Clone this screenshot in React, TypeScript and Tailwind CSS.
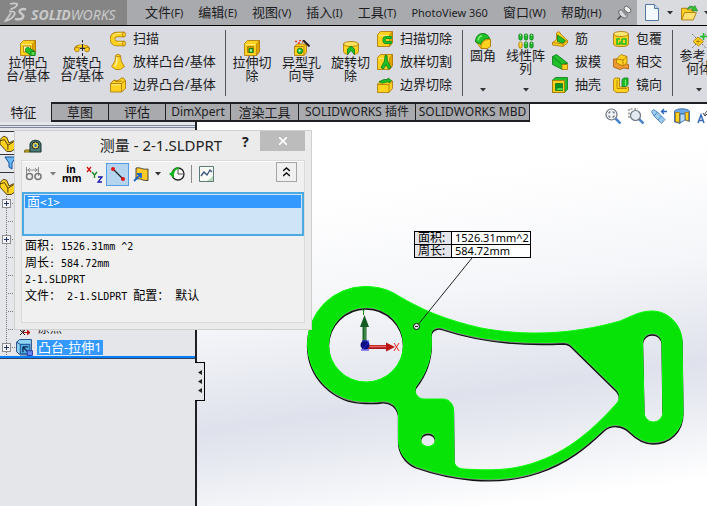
import React from "react";

const GOLD = "#ffd21f";
const EDGE = "#a87406";
const DARK = "#e0a400";
const GREEN = "#1fc02a";
const GEDGE = "#0b7a18";

type IconProps = { children: React.ReactNode; size?: number; box?: string };

function Icon({ children, size = 16, box = "0 0 16 16" }: IconProps) {
  return (
    <svg width={size} height={size} viewBox={box} fill="none" strokeWidth=".8" className="shrink-0" aria-hidden="true">
      {children}
    </svg>
  );
}

function Cube() {
  return (
    <>
      <path d="M.5 3.500 3.500.500h12v11l-3 4H.5Z" fill={GOLD} stroke={EDGE} />
      <path d="M12.500 4 15.500.500v11l-3 4Z" fill={DARK} stroke={EDGE} strokeWidth=".6" />
      <path d="M1.500 4.500h10" stroke="#fff09a" />
    </>
  );
}

const ExtrudeBoss = () => (
  <Icon>
    <Cube />
    <path d="M3.500 6h7v6h-7Z" fill="#fff3ae" stroke={EDGE} />
    <path d="M5.500 9 7.500 7l7.500 4.500v4h-4l-5.500-4Z" fill={GREEN} stroke={GEDGE} />
    <path d="M11 11.500h4v4h-4Z" fill="#55e04b" stroke={GEDGE} />
  </Icon>
);
const RevolveBoss = () => (
  <Icon>
    <path d="M1.500 10C1.500 6.500 5 6 8 6s6.500.5 6.500 4" stroke={EDGE} strokeWidth="3.200" />
    <path d="M2 9.500C2.500 6.500 5 6 8 6s5.500.5 6 3.500" stroke={GOLD} strokeWidth="1.800" />
    <circle cx="3" cy="9.500" r="2.300" fill={GOLD} stroke={EDGE} />
    <circle cx="13" cy="9.500" r="2.300" fill={GOLD} stroke={EDGE} />
    <path d="M8.500 0v2.500m0 1.500v7m0 2v3M6 8.500h5" stroke="#222" strokeWidth="1" />
  </Icon>
);
const Sweep = () => (
  <Icon>
    <path d="M14 3.500H7a4.500 4.500 0 0 0 0 9h7" stroke={EDGE} strokeWidth="5.500" />
    <path d="M14 3.500H7a4.500 4.500 0 0 0 0 9h7" stroke={GOLD} strokeWidth="4.200" />
    <path d="M13 2.500H7a5 5 0 0 0-4 3M13 11.500H8" stroke="#fff2a0" />
    <ellipse cx="14" cy="3.500" rx="1.500" ry="2.500" fill={GOLD} stroke={EDGE} />
    <ellipse cx="14" cy="12.500" rx="1.500" ry="2.500" fill={GOLD} stroke={EDGE} />
  </Icon>
);
const Loft = () => (
  <Icon>
    <path d="M5.500 1.500c1-1.300 4-1.300 5 0l.7 5.500 3.300 5.500-4 3h-5l-4-3L5 7Z" fill={GOLD} stroke={EDGE} />
    <path d="M6.800 3v5L5 12.500" stroke="#fff2a0" strokeWidth="1.500" />
    <path d="M5.500 2c1.500 1 3.500 1 5 0" stroke={EDGE} />
  </Icon>
);
const Boundary = () => (
  <Icon>
    <path d="M.5 6.500 4 3c3 1.500 6 0 7-2h2.500l2 3v7.500l-4 3.500H.5Z" fill={GOLD} stroke={EDGE} />
    <path d="M.5 6.500h11v8.500M11.500 6.500l4-3M4 3l2 1.500 6-.5" stroke={EDGE} />
    <path d="M1.500 7.800h9" stroke="#fff2a0" />
  </Icon>
);
const ExtrudeCut = () => (
  <Icon>
    <Cube />
    <path d="M3.500 6.500h6v6h-6Z" fill="#c99700" stroke={EDGE} />
    <path d="M5 8.500h4v4H5Z" fill={GREEN} stroke={GEDGE} />
    <path d="M6 9.500h2v2H6Z" fill="#c4efb4" />
  </Icon>
);
const HoleWizard = () => (
  <Icon>
    <path d="M.5 6.500 3 4h9.500v8.500L10 15.500H.5Z" fill={GOLD} stroke={EDGE} />
    <path d="M.5 6.500H10v9m0-9L12.500 4" stroke={EDGE} />
    <circle cx="6" cy="11" r="2.800" fill={GREEN} stroke={GEDGE} />
    <circle cx="5.500" cy="10.500" r="1" fill="#dff" />
    <path d="m9 0 6.500 6.500" stroke="#222" strokeWidth="2" />
    <path d="M1 1.500h2M5 .500h2M4 3h2M8 2h1" stroke="#e83a1a" strokeWidth="1.500" />
  </Icon>
);
const RevolveCut = () => (
  <Icon>
    <path d="M.5 4v7.500c0 1.500 2 2.500 4.500 3V9h6v5.500c2.500-.5 4.500-1.500 4.500-3V4Z" fill={GOLD} stroke={EDGE} />
    <ellipse cx="8" cy="4" rx="7.500" ry="2.500" fill="#ffe35a" stroke={EDGE} />
    <path d="M4.500 14.500V9L8 6l3.500 3v5.500L8 10.500Z" fill={GREEN} stroke={GEDGE} />
  </Icon>
);
const SweepCut = () => (
  <Icon>
    <Cube />
    <path d="M15 6.500H9.500a2.500 2.500 0 0 0 0 5H15" stroke={GEDGE} strokeWidth="3" />
    <path d="M15 6.500H9.500a2.500 2.500 0 0 0 0 5H15" stroke={GREEN} strokeWidth="1.900" />
  </Icon>
);
const LoftCut = () => (
  <Icon>
    <Cube />
    <path d="M8 1.500h2l.5 5.500 3.500 6.500-2.500 1.500L9 10.500 6.500 15 4 13.500 7.500 7Z" fill={GREEN} stroke={GEDGE} />
  </Icon>
);
const BoundaryCut = () => (
  <Icon>
    <path d="m.5 7 3-3h12v7.500l-3.500 4H.5Z" fill={GOLD} stroke={EDGE} />
    <path d="M.5 7.500H12v8M12 7.500 15.500 4" stroke={EDGE} />
    <path d="M2 4.500C4 4.500 5 2.500 8 2.500h3V1l3.500 2.500L12 6V4.800C9 4.500 8 6.500 4 6Z" fill={GREEN} stroke={GEDGE} />
  </Icon>
);
const Fillet = () => (
  <Icon>
    <path d="M.5 8 6 1h4l5.500 5.500v6L12 15.500H6Z" fill={GOLD} stroke={EDGE} />
    <path d="M.5 9C.5 3.500 3.500.500 8 .500c3.500 0 6 2.500 6.500 5C10 5 6.500 8 6 11.500Z" fill={GREEN} stroke={GEDGE} />
    <path d="M6 15.500C5.500 9 9.500 6 15.500 6.500v7l-3 2Z" fill={GOLD} stroke={EDGE} />
    <path d="M3 7.500C3.500 5 5 3.300 7 2.800" stroke="#8af07c" strokeWidth="1.500" />
  </Icon>
);
const Pattern = () => (
  <Icon>
    {[2.5, 8, 13.5].map((x) =>
      [4, 12].map((y) => {
        const seed = x === 2.5 && y > 10;
        return (
          <g key={`${x}-${y}`}>
            <rect x={x - 1.6} y={y - 3} width="3.200" height="6" rx="1.300" fill={seed ? GOLD : GREEN} stroke={seed ? EDGE : GEDGE} />
            <circle cx={x} cy={y - 1.7} r=".7" fill="#c6f5b8" />
          </g>
        );
      })
    )}
  </Icon>
);
const Rib = () => (
  <Icon>
    <path d="M.5 11.500 4.500 8.500V2L7 .500 9.500 4 13.500 7.500l2 2V12L11 15.500.5 14Z" fill={GOLD} stroke={EDGE} />
    <path d="M5.500 10.500V4l8 5.500L11 12Z" fill={GREEN} stroke={GEDGE} />
    <path d="m.5 11.500 10.500 1.500v2.500M11 13l4.500-3.500" stroke={EDGE} />
  </Icon>
);
const Draft = () => (
  <Icon>
    <path d="m.5 2.500 4-2 11 8.500-5 6.500-10-5Z" fill={GREEN} stroke={GEDGE} />
    <path d="m.5 2.500 9.500 8L15.500 9" stroke={GEDGE} />
    <path d="M10 10.500h5.500v5H10Z" fill={GOLD} stroke={EDGE} />
  </Icon>
);
const Shell = () => (
  <Icon>
    <path d="m.5 3 3-2.500h12v12l-3 3H.5Z" fill={GREEN} stroke={GEDGE} />
    <path d="M.5 3.500h12v12H.5Z" fill={GOLD} stroke={EDGE} />
    <path d="M3.500 6.500h7v7h-7Z" fill="#0d9220" stroke={GEDGE} />
    <path d="M4 13 6 11h4.500v2Z" fill="#4cda4a" />
  </Icon>
);
const Wrap = () => (
  <Icon>
    <path d="M.5 3v10c0 3.500 15 3.500 15 0V3Z" fill={GOLD} stroke={EDGE} />
    <ellipse cx="8" cy="3" rx="7.500" ry="2.500" fill="#ffe870" stroke={EDGE} />
    <path d="M7 8H4v5h3v-2.500M9 8h4v5H9V8" stroke={GREEN} strokeWidth="1.600" />
  </Icon>
);
const Intersect = () => (
  <Icon>
    <path d="M.5 5H7l4 4 4.500 1.500v4.500L11 14l-4 1.500L.5 13Z" fill="#ee9a32" stroke="#a85b0a" />
    <path d="M3.500 5 8 .500l6 2V9l-4 3-6.500-3Z" fill={GOLD} stroke={EDGE} />
    <path d="m3.500 5 6.500 1v6m0-6 4-3.500" stroke={EDGE} />
  </Icon>
);
const Mirror = () => (
  <Icon>
    <path d="M.5 2.500 2 1h4.500v9h9v4L14 15.500H3L.5 13Z" fill={GOLD} stroke={EDGE} />
    <path d="M9 2.500 11 1h4v6.500l-2 2H9Z" fill={GREEN} stroke={GEDGE} />
    <path d="M4 3v8.500h10" stroke={EDGE} />
    <path d="M12.500 3v6" stroke="#8af07c" />
  </Icon>
);
const RefGeometry = () => (
  <Icon>
    <path d="m1 1 14 14M15 1 1 15" stroke="#555" strokeDasharray="2 1.500" />
    <path d="m7 4 5.500 4.500L7.500 13 2 8.500Z" fill={GOLD} stroke={EDGE} />
    <path d="M7 6.500v4M5 8.500h4.500" stroke={EDGE} />
    <path d="M12.500 0v7M9 3.500h7" stroke={GREEN} strokeWidth="1.500" />
  </Icon>
);

function Caret({ className = "" }: { className?: string }) {
  return (
    <svg width="6" height="4" viewBox="0 0 6 4" className={`shrink-0 ${className}`} aria-hidden="true">
      <path d="M0 0h6L3 3.500Z" fill="#333" />
    </svg>
  );
}

type BigProps = { icon: React.ReactNode; lines: string[]; width: string; top?: boolean; menu?: boolean };

function BigCommand({ icon, lines, width, top, menu }: BigProps) {
  return (
    <button className={`flex h-full shrink-0 flex-col items-center ${top ? "pt-[7px]" : "pt-[14px]"} ${width}`}>
      {icon}
      {lines.map((l) => (
        <span key={l} className="whitespace-nowrap text-[13px] leading-[13px]">{l}</span>
      ))}
      {menu && <Caret className="mb-[10px] mt-auto" />}
    </button>
  );
}

function Stack({ items, className }: { items: [React.ReactNode, string][]; className: string }) {
  return (
    <div className={`flex shrink-0 flex-col pt-px ${className}`}>
      {items.map(([icon, label]) => (
        <button key={label} className="flex h-[23px] items-center gap-[7px] whitespace-nowrap text-[13px]">
          {icon}
          {label}
        </button>
      ))}
    </div>
  );
}

const Divider = () => <div className="mt-1 h-[66px] w-px shrink-0 bg-[#55565a]" />;

const menus: [string, string][] = [
  ["文件", "(F)"], ["编辑", "(E)"], ["视图", "(V)"], ["插入", "(I)"], ["工具", "(T)"],
  ["", "PhotoView 360"], ["窗口", "(W)"], ["帮助", "(H)"],
];

function TitleBar() {
  return (
    <header className="flex h-[26px] shrink-0 border-b border-black bg-[#a9aaae]">
      <div className="flex w-[127px] shrink-0 items-center bg-[#858585] pl-1 text-[#c9c9c9]">
        <svg width="23" height="22" viewBox="0 0 23 22" fill="none" stroke="currentColor" strokeWidth="1.800" aria-hidden="true">
          <path d="M6 2c4-1.200 8-.8 7 1.200C12.200 4.800 9 6.500 6.500 7.500M5 9.500c5-.5 6.500 1 5.500 3-1.300 2.700-5 5.500-9 6.500l5.500-8" />
          <path d="M22 7.500c-3-1-6.500-.2-6.500 2 0 1.800 4.300 2.300 3.800 5-.3 2.600-4.800 3.400-8.300 2.300" strokeWidth="2.400" />
        </svg>
        <span className="whitespace-nowrap pl-1 pt-1 text-[14px] leading-5 italic"><b>SOLID</b>WORKS</span>
      </div>
      <nav className="flex shrink-0 items-center gap-[15px] whitespace-nowrap pl-[18px]">
        {menus.map(([cn, key]) => (
          <button key={key} className="text-[13px] leading-5">
            {cn}
            <span className="text-[11px]">{key}</span>
          </button>
        ))}
      </nav>
      <button aria-label="固定菜单" className="ml-[14px] shrink-0">
        <Icon>
          <path d="m1.500 14.500 4-4" stroke="#444" strokeWidth="1.500" />
          <ellipse cx="7" cy="9" rx="5" ry="3" transform="rotate(42 7 9)" fill="#d9dadd" stroke="#555" />
          <path d="m6 6.500 3.500-4.500 5 4-5 5Z" fill="#8f9197" />
          <ellipse cx="11.500" cy="4.500" rx="4" ry="2.500" transform="rotate(42 11.500 4.500)" fill="#eee" stroke="#555" />
        </Icon>
      </button>
      <div className="ml-auto flex w-[70px] shrink-0 items-center overflow-hidden bg-[#dadbdf] pl-2">
        <button aria-label="新建" className="shrink-0">
          <svg width="14" height="17" viewBox="0 0 14 17" aria-hidden="true">
            <path d="M.5.500h9l4 4v12H.5Z" fill="#f4f9fe" stroke="#5379a3" />
            <path d="M9.500.500v4h4" fill="#c7dcf2" stroke="#5379a3" />
          </svg>
        </button>
        <Caret className="ml-2" />
        <button aria-label="打开" className="ml-2 shrink-0">
          <Icon size={17}>
            <path d="M.5 14V4h5l1 1.500h5V14Z" fill={GOLD} stroke={EDGE} />
            <path d="m.5 15 3-7h11l-3 7Z" fill="#ffe372" stroke={EDGE} />
            <path d="M6 5c1-3.500 4-3.500 6-2l1-1.500 2.500 5-5.500-.5 1-1.500C9.500 3.500 8 3.500 6 5Z" fill="#36c436" stroke={GEDGE} strokeWidth=".6" />
          </Icon>
        </button>
        <Caret className="ml-[6px]" />
      </div>
    </header>
  );
}

function Ribbon() {
  return (
    <section className="flex h-[76px] shrink-0 overflow-hidden bg-[#d9dbe0]">
      <BigCommand icon={<ExtrudeBoss />} lines={["拉伸凸", "台/基体"]} width="w-[56px]" />
      <BigCommand icon={<RevolveBoss />} lines={["旋转凸", "台/基体"]} width="w-[52px]" />
      <Stack className="w-[117px] pl-[2px]" items={[[<Sweep />, "扫描"], [<Loft />, "放样凸台/基体"], [<Boundary />, "边界凸台/基体"]]} />
      <Divider />
      <BigCommand icon={<ExtrudeCut />} lines={["拉伸切", "除"]} width="w-[52px]" />
      <BigCommand icon={<HoleWizard />} lines={["异型孔", "向导"]} width="w-[47px]" />
      <BigCommand icon={<RevolveCut />} lines={["旋转切", "除"]} width="w-[51px]" />
      <Stack className="w-[86px] pl-px" items={[[<SweepCut />, "扫描切除"], [<LoftCut />, "放样切割"], [<BoundaryCut />, "边界切除"]]} />
      <Divider />
      <BigCommand top menu icon={<Fillet />} lines={["圆角"]} width="w-[40px]" />
      <BigCommand top menu icon={<Pattern />} lines={["线性阵", "列"]} width="w-[45px]" />
      <Stack className="w-[61px] pl-1" items={[[<Rib />, "筋"], [<Draft />, "拔模"], [<Shell />, "抽壳"]]} />
      <Stack className="w-[63px] pl-1" items={[[<Wrap />, "包覆"], [<Intersect />, "相交"], [<Mirror />, "镜向"]]} />
      <Divider />
      <BigCommand top menu icon={<RefGeometry />} lines={["参考几", "何体"]} width="w-[52px]" />
    </section>
  );
}

const tabs: [string, string][] = [
  ["草图", "w-[57px]"], ["评估", "w-[57px]"], ["DimXpert", "w-[65px]"],
  ["渲染工具", "w-[68px]"], ["SOLIDWORKS 插件", "w-[117px]"], ["SOLIDWORKS MBD", "w-[115px]"],
];

function ViewTools() {
  return (
    <div className="z-10 flex h-[28px] min-w-0 flex-1 items-center gap-[7px] overflow-hidden border-t-2 border-[#202024] bg-white pb-[2px] pl-[75px]">
      <button aria-label="整屏显示全图" className="shrink-0">
        <Icon>
          <path d="m10.500 10.500 5 5" stroke="#4a84cc" strokeWidth="2.500" />
          <circle cx="6.500" cy="6.500" r="5.500" fill="#eef4fa" stroke="#70777f" strokeWidth="1.200" />
          <path d="M4 5.500V4h1.500M7.500 4H9v1.500M9 7.500V9H7.500M5.500 9H4V7.500" stroke="#333" />
        </Icon>
      </button>
      <button aria-label="局部放大" className="shrink-0">
        <Icon>
          <path d="m11 11 4.500 4.500" stroke="#4a84cc" strokeWidth="2.500" />
          <circle cx="7.500" cy="7.500" r="5" fill="#e3eaf2" stroke="#70777f" strokeWidth="1.200" />
          <path d="M1 10V1h9" stroke="#333" strokeDasharray="2 1.500" />
        </Icon>
      </button>
      <button aria-label="上一视图" className="shrink-0">
        <Icon>
          <path d="m.5 3.500 2-2 4 2.500 7.500 7.500-3.500 4L3 8Z" fill="#9ccbf0" stroke="#3b76b8" />
          <path d="m3 8 3.500-4M7 12l3.500-4" stroke="#3b76b8" />
          <path d="M16 3.500h-5.500M13 1l-2.500 2.500L13 6" stroke="#2862b8" strokeWidth="1.300" />
        </Icon>
      </button>
      <button aria-label="剖面视图" className="shrink-0">
        <Icon>
          <path d="M.5 3c3-3 12-3 15 0v10.500L11 12V6H6v9.500L.5 14Z" fill="#6aa9e6" stroke="#2b5f9e" />
          <path d="M1.500 4.500h4v10l-4-1ZM11 4.500h3.500v8.500L11 11.500Z" fill={GOLD} stroke={EDGE} />
          <path d="M6 6h5v6l-5 3Z" fill="#b9d8f5" stroke="#2b5f9e" />
        </Icon>
      </button>
      <button aria-label="视图定向" className="shrink-0">
        <Icon>
          <path d="m1 15 3-8 3 8M2 12.500h4" stroke="#3b6bb5" strokeWidth="1.500" />
          <path d="M15 2C9 2 8 5 8 7M6 5l2 3 3-3M10 14c4 1 5-1 6-3" stroke="#444" strokeWidth="1" />
        </Icon>
      </button>
    </div>
  );
}

function TabRow() {
  return (
    <div className="flex h-[20px] shrink-0 bg-[#d9dbe0]" role="tablist">
      <button role="tab" aria-selected="true" className="w-[51px] shrink-0 pl-1 pr-2 text-[13px] leading-4">特征</button>
      {tabs.map(([label, w]) => (
        <button
          key={label}
          role="tab"
          aria-selected="false"
          className={`shrink-0 whitespace-nowrap border-y-2 border-l border-[#202024] bg-[#a9aaae] leading-4 last-of-type:border-r ${w} ${/[A-Z]/.test(label) ? "text-[12px]" : "text-[13px]"}`}
        >
          {label}
        </button>
      ))}
      <ViewTools />
    </div>
  );
}

const YellowPart = () => (
  <Icon size={18}>
    <path d="m0 5 3-3 3 1 2 5 4-2 3 3v3l-5 3.500H6L0 9Z" fill={GOLD} stroke="#3a2c05" />
    <path d="m0 6 4-1 3 5 5-3M7 10v4" stroke="#3a2c05" />
  </Icon>
);

function Branch({ plus }: { plus?: boolean }) {
  return (
    <svg width="16" height="18" viewBox="0 0 16 18" className="shrink-0" shapeRendering="crispEdges" aria-hidden="true">
      <path d="M6.500 0v18M8 9.500h7" stroke="#777" strokeDasharray="1 1" />
      {plus && (
        <>
          <path d="M2.500 5.500h8v8h-8Z" fill="#f5f5f7" stroke="#8b8b90" />
          <path d="M4 9.500h5M6.500 7v5" stroke="#22356b" />
        </>
      )}
    </svg>
  );
}

function FeatureTree() {
  return (
    <aside className="relative w-[197px] shrink-0 border-r-2 border-[#202024] bg-[#e4e6ea]">
      <div className="mb-[3px] mt-[3px] h-[3px] border-y border-[#7c8599]" />
      <div className="h-6 w-[14px] overflow-hidden border-y border-[#333] bg-[#eceef2] pt-[2px]"><YellowPart /></div>
      <div className="h-[18px] border-b border-[#333] pl-1 pt-px">
        <svg width="14" height="14" viewBox="0 0 14 14" aria-hidden="true">
          <path d="M1 1h11L8 7v6l-3-2V7Z" fill="#67b8f3" stroke="#174c9c" />
        </svg>
      </div>
      <div className="flex h-[21px] items-center pt-1"><YellowPart /></div>
      <ul>
        {[true, false, true, false, false, false, false].map((plus, i) => (
          <li key={i} className="h-[18px]"><Branch plus={plus} /></li>
        ))}
        <li className="flex h-[18px] items-center">
          <Branch />
          <span className="flex items-center gap-[7px] pl-1 text-[12px] leading-[14px]">
            <svg width="11" height="12" viewBox="0 0 11 12" aria-hidden="true">
              <path d="M3 0v10M0 7l5 5M5 7l-5 5" stroke="#222" />
              <path d="M3 9.500h7M7 7l3 2.500L7 12" stroke="#b50f0f" fill="#b50f0f" />
            </svg>
            原点
          </span>
        </li>
        <li className="flex h-[18px] items-center">
          <Branch plus />
          <Icon size={17}>
            <path d="m.5 3 3-2.500h11v11l-2 3.500H4l-3.500-3Z" fill="#8fd4f5" stroke="#123879" />
            <path d="m.5 3 3.500 2h9v9H4V5" fill="#4db0e6" stroke="#123879" />
            <path d="M6.500 7.500h5m-5 0v5m0-5 6 6" stroke="#102654" strokeWidth="1.200" />
            <path d="M10.500 11h5v4.500h-5Z" fill="#6589ef" stroke="#1b2e9b" />
          </Icon>
          <span className="ml-1 h-[15px] bg-[#3399ff] px-px text-[13px] leading-[15px] text-white">凸台-拉伸1</span>
        </li>
      </ul>
      <div className="h-[3px] border-b border-[#31445f] bg-[#007fff]" />
      <button aria-label="折叠面板" className="absolute -right-[10px] top-[240px] z-10 flex h-[39px] w-[10px] flex-col items-center justify-center gap-1 border border-l-0 border-black bg-[#e4e6ea]">
        {[0, 1, 2].map((n) => (
          <svg key={n} width="4" height="5" viewBox="0 0 4 5" aria-hidden="true"><path d="M4 0v5L0 2.500Z" fill="#222" /></svg>
        ))}
      </button>
    </aside>
  );
}

const PLATE =
  "M365 286.500C379 286.500 389 290 397 295C422 310 446 320 481 328C524 336 571 335 620 321C632 316 640 311 652 311C668 311 681 324 682 340L683 412C683 430 670 442 653 442C645 442 637 438 630 431C622 423 611 423 604 429C586 446 568 461 539 471C495 486 447 477 416 466C404 461 398.500 450 398.500 440V414C397 405 390 400 381 401C376 402 371 401.500 365 401.500A57.500 57.500 0 0 1 365 286.500Z" +
  "M366 307A37.500 37.500 0 0 0 366 382A37.500 37.500 0 0 0 366 307Z" +
  "M428 432.500A7.500 7 0 0 0 428 446.500A7.500 7 0 0 0 428 432.500Z" +
  "M652 333A9.500 10 0 0 0 642.500 342L644 412A9.500 10 0 0 0 663 412L662 342A9.500 10 0 0 0 652 333Z" +
  "M431 335C431 328 438 326 443 328C479 340 521 344 563 342C566 342 568 342 571 345L617 390C620 394 620 399 617 403C590 433 563 456 523 466C503 471 481 470 464 469C458 469 454 465 454 460L453.500 410C453.500 404 449 399 443 399L424 399C417 399 413 391 416 386C427 372 433 355 431 335Z";

function Model() {
  return (
    <svg className="absolute left-0 top-0" width="510" height="384" viewBox="197 122 510 384" role="img" aria-label="零件模型">
      <path d={PLATE} transform="translate(0 2)" fill="#858585" stroke="#111" strokeWidth="1.300" fillRule="evenodd" />
      <path d={PLATE} fill="#07e307" stroke="#09fb09" strokeWidth="1" fillRule="evenodd" />
      <path d="M472 258 417 326" stroke="#222" strokeWidth="1" />
      <circle cx="416.500" cy="326.500" r="3" fill="#e4e6ea" stroke="#111" />
      <path d="M415 326.500h3" stroke="#111" />
      <path d="m361.500 308 2 3 2-3m-2 3v4" stroke="#0a8a0a" fill="none" />
      <path d="M364.500 345v-20" stroke="#1b6426" strokeWidth="4" />
      <path d="M365 343v-17" stroke="#67a36e" />
      <path d="m360 327 4.500-12 4.500 12Z" fill="#145a20" />
      <path d="M366 347h22" stroke="#a91818" strokeWidth="4" />
      <path d="M368 346.500h18" stroke="#f26464" strokeWidth="1.500" />
      <path d="m386 342.500 9 4.500-9 4.500Z" fill="#bd1414" />
      <path d="m394 343 5 8m0-8-5 8" stroke="#f02020" />
      <circle cx="365" cy="345" r="4.500" fill="#10107e" />
      <path d="M361 350h8m-7-9h7m-6 8 6-7" stroke="#2424e0" />
    </svg>
  );
}

function Callout() {
  return (
    <table className="absolute left-[217px] top-[109px] border-collapse bg-white text-[11px] leading-3 text-black">
      <tbody>
        {[["面积:", "1526.31mm^2"], ["周长:", "584.72mm"]].map(([k, v]) => (
          <tr key={k}>
            <th scope="row" className="h-[13px] w-[37px] whitespace-nowrap border border-black bg-[#e4e5eb] p-0 pl-[3px] text-left text-[12px] font-normal leading-3">{k}</th>
            <td className="w-[79px] whitespace-nowrap border border-black p-0 pl-[3px]">{v}</td>
          </tr>
        ))}
      </tbody>
    </table>
  );
}

const Cn = ({ children }: { children: React.ReactNode }) => <span className="text-[12px]">{children}</span>;

function MeasureDialog() {
  return (
    <div role="dialog" aria-labelledby="measure-title" className="absolute left-[14px] top-[130px] z-20 flex h-[200px] w-[298px] flex-col border border-[#cfcfcf] bg-[#ebebeb] px-[6px] pb-[6px]">
      <div className="flex h-[29px] shrink-0 items-start">
        <svg width="18" height="14" viewBox="0 0 18 14" className="ml-[3px] mt-2" aria-hidden="true">
          <path d="M1 11h5v2H0Z" fill="#e6c52e" stroke="#6b5c10" />
          <path d="M6 13V5c1-5 10-5 11 0v8Z" fill="#4d7d76" stroke="#15302d" />
          <circle cx="11.500" cy="6.500" r="3.500" fill="#e6dc5a" stroke="#222" />
          <circle cx="11.500" cy="6.500" r="1.500" fill="#387bb5" />
        </svg>
        <h1 id="measure-title" className="flex-1 whitespace-nowrap pl-[42px] pt-1 text-center text-[15px] leading-5 text-[#222]">测量 - 2-1.SLDPRT</h1>
        <button aria-label="帮助" className="w-[22px] pl-1 pt-px text-left text-[14px] font-bold leading-5">?</button>
        <button aria-label="关闭" className="flex h-5 w-[45px] items-center justify-center bg-[#bcbcbc]">
          <svg width="8" height="8" viewBox="0 0 8 8" aria-hidden="true"><path d="m0 0 8 8M8 0 0 8" stroke="#fff" strokeWidth="1.600" /></svg>
        </button>
      </div>
      <div className="flex flex-1 flex-col border border-[#dadada] bg-[#f0f0f0]">
        <div className="flex h-[31px] items-center border-t border-white pb-[6px] pl-[3px]">
          <button aria-label="圆弧/圆测量" className="flex items-center gap-2">
            <svg width="17" height="14" viewBox="0 0 17 14" fill="none" stroke="#777" aria-hidden="true">
              <path d="M1.500 0v10M1 3h12.500M13.500 0v9M5 1 3 3l2 2M10 1l2 2-2 2" strokeWidth=".8" />
              <circle cx="4.500" cy="9.500" r="3" strokeWidth="1.500" /><circle cx="13" cy="9.500" r="3" strokeWidth="1.500" />
            </svg>
            <Caret className="opacity-60" />
          </button>
          <button aria-label="单位" className="ml-[6px] w-[18px] text-[10px] font-bold leading-[9px] text-black">in<br />mm</button>
          <button aria-label="显示 XYZ 测量" className="ml-[6px]">
            <Icon box="0 0 17 17" size={17}>
              <path d="m1 1 4 5m0-5L1 6" stroke="#d11212" strokeWidth="1.300" />
              <path d="m6 6 2.500 3L11 6M8.500 9v3" stroke="#12851b" strokeWidth="1.300" />
              <path d="M12 11h4l-4 5h4" stroke="#1b1ba8" strokeWidth="1.300" />
            </Icon>
          </button>
          <button aria-label="点到点" aria-pressed="true" className="ml-[3px] flex h-[23px] w-[23px] shrink-0 items-center justify-center border border-[#569de5] bg-[#b5d5ee]">
            <Icon>
              <path d="m3 3 10 10" stroke="#222" strokeWidth="1.300" />
              <circle cx="3" cy="3" r="2" fill="#e11212" /><circle cx="13" cy="13" r="2" fill="#e11212" />
            </Icon>
          </button>
          <button aria-label="投影于" className="ml-1 flex items-center gap-[6px]">
            <Icon>
              <path d="M3 2c5-1 6 2 12 1v11.500c-6 .5-7-2.500-12-1.500Z" fill="#ffc928" stroke="#222" />
              <path d="m1 15 7-7M4 8h4v4" stroke="#1b65c9" strokeWidth="1.800" />
            </Icon>
            <Caret />
          </button>
          <button aria-label="测量历史记录" className="ml-2">
            <Icon>
              <circle cx="9" cy="8" r="6" fill="#f8f8f8" stroke="#222" strokeWidth="1.300" />
              <path d="M9 3v5h5" stroke="#222" />
              <path d="m0 8 5-4v8Z" fill="#16b31d" />
              <path d="M4 8C5 3 7 2 10 2" stroke="#16b31d" strokeWidth="1.800" />
            </Icon>
          </button>
          <div className="ml-[6px] h-[18px] w-px bg-[#8b8b8b]" />
          <button aria-label="创建传感器" className="ml-[7px]">
            <svg width="15" height="16" viewBox="0 0 15 16" fill="none" aria-hidden="true">
              <path d="M.5.500h14v15H.5Z" fill="#fafaf4" stroke="#5b7a7a" />
              <path d="m8 15 6-5v5Z" fill="#b9dbba" />
              <path d="m2 10 3-4 3 3 3-5 2 2" stroke="#35517d" strokeWidth="1.300" />
            </svg>
          </button>
          <button aria-label="收起" className="mb-1 ml-auto mr-[7px] flex h-5 w-[21px] items-center justify-center border border-[#a5a5a5]">
            <svg width="7" height="10" viewBox="0 0 7 10" fill="none" aria-hidden="true"><path d="m0 4 3.500-3L7 4M0 9l3.500-3L7 9" stroke="#111" strokeWidth="1.500" /></svg>
          </button>
        </div>
        <ul role="listbox" aria-label="所选项目" className="h-11 border-2 border-[#4caae2] bg-[#d0e4f8] p-px">
          <li role="option" aria-selected="true" className="h-[13px] bg-[#3399ff] pl-[2px] text-[13px] leading-[13px] text-white">
            面<span className="font-['DejaVu_Sans_Mono'] text-[11px]">&lt;1&gt;</span>
          </li>
        </ul>
        <div className="whitespace-pre pl-[3px] pt-[2px] font-['DejaVu_Sans_Mono','Noto_Sans_CJK_SC',monospace] text-[10px] leading-4 text-black">
          <p><Cn>面积</Cn>: 1526.31mm ^2</p>
          <p><Cn>周长</Cn>: 584.72mm</p>
          <p>2-1.SLDPRT</p>
          <p><Cn>文件：</Cn> 2-1.SLDPRT <Cn>配置：</Cn> <Cn>默认</Cn></p>
        </div>
      </div>
    </div>
  );
}

export default function App() {
  return (
    <div className="relative flex min-h-screen flex-col overflow-hidden bg-[#e4e6ea] font-['Noto_Sans','Noto_Sans_CJK_SC',sans-serif] text-[#1c1c1e]">
      <TitleBar />
      <Ribbon />
      <TabRow />
      <main className="flex flex-1">
        <FeatureTree />
        <section className="relative min-w-0 flex-1 overflow-hidden bg-[linear-gradient(172deg,#ffffff_20%,#f5f6f9_45%,#dfe2ec_68%,#e4e7ef_74%,#ffffff_94%)]">
          <Model />
          <Callout />
        </section>
      </main>
      <MeasureDialog />
    </div>
  );
}
